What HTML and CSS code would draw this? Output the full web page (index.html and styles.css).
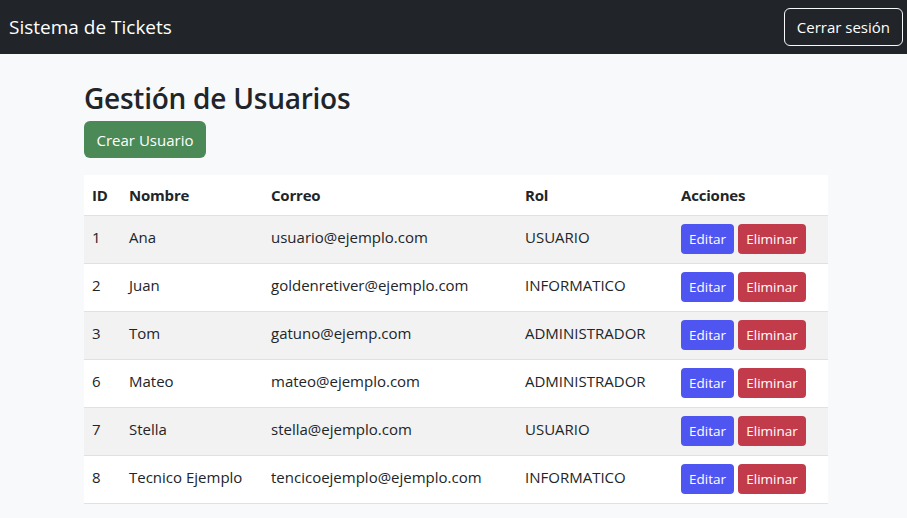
FILE: index.html
```html
<!DOCTYPE html>
<html lang="es">
<head>
<meta charset="utf-8">
<title>Sistema de Tickets</title>
<link rel="stylesheet" href="styles.css">
</head>
<body>
<nav class="navbar">
  <span class="brand">Sistema de Tickets</span>
  <button class="btn-logout">Cerrar sesión</button>
</nav>
<main class="container">
  <h2 class="title">Gestión de Usuarios</h2>
  <button class="btn-create">Crear Usuario</button>
  <table class="table">
    <thead>
      <tr><th class="c-id">ID</th><th class="c-name">Nombre</th><th class="c-mail">Correo</th><th class="c-rol">Rol</th><th>Acciones</th></tr>
    </thead>
    <tbody>
      <tr><td>1</td><td>Ana</td><td>usuario@ejemplo.com</td><td>USUARIO</td><td class="actions"><button class="btn-edit">Editar</button><button class="btn-del">Eliminar</button></td></tr>
      <tr><td>2</td><td>Juan</td><td>goldenretiver@ejemplo.com</td><td>INFORMATICO</td><td class="actions"><button class="btn-edit">Editar</button><button class="btn-del">Eliminar</button></td></tr>
      <tr><td>3</td><td>Tom</td><td>gatuno@ejemp.com</td><td>ADMINISTRADOR</td><td class="actions"><button class="btn-edit">Editar</button><button class="btn-del">Eliminar</button></td></tr>
      <tr><td>6</td><td>Mateo</td><td>mateo@ejemplo.com</td><td>ADMINISTRADOR</td><td class="actions"><button class="btn-edit">Editar</button><button class="btn-del">Eliminar</button></td></tr>
      <tr><td>7</td><td>Stella</td><td>stella@ejemplo.com</td><td>USUARIO</td><td class="actions"><button class="btn-edit">Editar</button><button class="btn-del">Eliminar</button></td></tr>
      <tr><td>8</td><td>Tecnico Ejemplo</td><td>tencicoejemplo@ejemplo.com</td><td>INFORMATICO</td><td class="actions"><button class="btn-edit">Editar</button><button class="btn-del">Eliminar</button></td></tr>
    </tbody>
  </table>
</main>
</body>
</html>
```
FILE: styles.css
```css
* { box-sizing: border-box; }
html, body { margin: 0; padding: 0; }
body {
  font-family: "Open Sans", "Noto Sans", "Liberation Sans", sans-serif;
  font-size: 15px;
  color: #212529;
  background: #f8f9fa;
}
.navbar {
  height: 54px;
  background: #212529;
  display: flex;
  align-items: center;
  justify-content: space-between;
  padding: 0 4px 0 9px;
}
.brand {
  color: #fff;
  font-size: 19px;
}
.btn-logout {
  font-family: inherit;
  font-size: 15px;
  color: #fff;
  background: transparent;
  border: 1px solid #f8f9fa;
  border-radius: 6px;
  height: 38px;
  padding: 0 12px;
  white-space: nowrap;
}
.container {
  width: 744px;
  margin-left: 84px;
  padding-top: 27px;
}
.title {
  margin: 0 0 6px;
  font-size: 28px;
  font-weight: 600;
  line-height: 34px;
  letter-spacing: -0.25px;
}
.btn-create {
  font-family: inherit;
  font-size: 15px;
  color: #fff;
  background: #4b8957;
  border: none;
  border-radius: 6px;
  height: 37px;
  padding: 0;
  width: 122px;
  white-space: nowrap;
  display: block;
}
.table {
  margin-top: 17px;
  width: 744px;
  border-collapse: collapse;
  background: #fff;
}
.table th, .table td {
  text-align: left;
  padding: 0 8px;
  border-bottom: 1px solid #dee2e6;
  vertical-align: middle;
}
.table th { height: 40px; font-weight: 700; letter-spacing: -0.2px; }
.table td { height: 48px; padding-bottom: 5px; }
.table td.actions { padding-bottom: 0; }
.table tbody tr:nth-child(odd) td { background: #f2f2f2; }
.c-id { width: 37px; }
.c-name { width: 142px; }
.c-mail { width: 254px; }
.c-rol { width: 156px; }
.actions { white-space: nowrap; }
.actions button {
  font-family: inherit;
  font-size: 13.5px;
  color: #fff;
  border: none;
  border-radius: 4px;
  height: 30px;
  padding: 0;
  vertical-align: middle;
}
.btn-edit { background: #4f55f1; margin-right: 4px; width: 53px; }
.btn-del { background: #c13b4b; width: 68px; }
```
